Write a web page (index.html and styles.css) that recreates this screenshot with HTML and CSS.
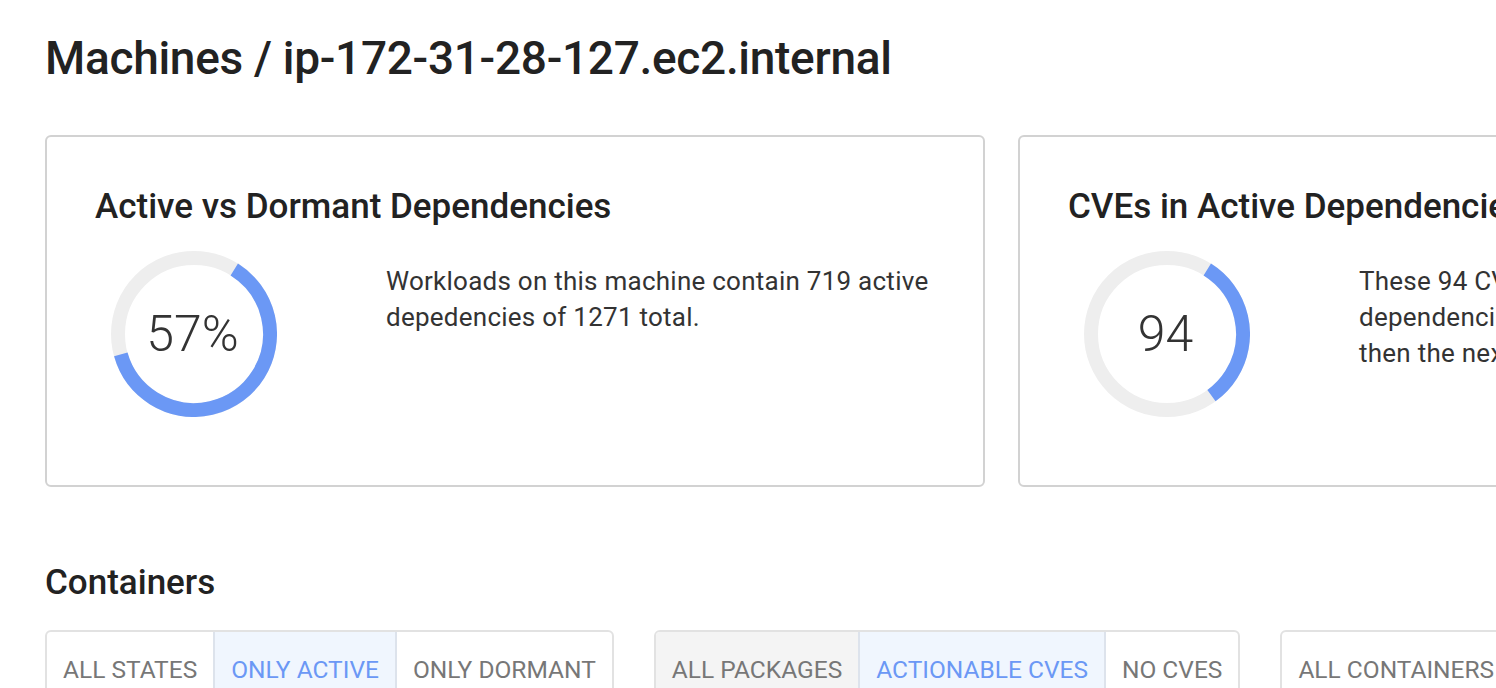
FILE: index.html
```html
<!DOCTYPE html>
<html>
<head>
<meta charset="utf-8">
<link rel="stylesheet" href="styles.css">
</head>
<body>
<main class="page">
  <h1 class="page-title">Machines / ip-172-31-28-127.ec2.internal</h1>

  <section class="cards">
    <article class="card">
      <h2 class="card-title">Active vs Dormant Dependencies</h2>
      <div class="card-body">
        <div class="donut">
          <svg viewBox="0 0 166 166" width="166" height="166">
            <circle cx="83" cy="83" r="76" fill="none" stroke="#eeeeee" stroke-width="14"/>
            <circle cx="83" cy="83" r="76" fill="none" stroke="#6b98f5" stroke-width="14" stroke-dasharray="294.5 477.5" transform="rotate(-58 83 83)"/>
          </svg>
          <span class="donut-value">57%</span>
        </div>
        <p class="card-text">Workloads on this machine contain 719 active depedencies of 1271 total.</p>
      </div>
    </article>

    <article class="card">
      <h2 class="card-title">CVEs in Active Dependencies</h2>
      <div class="card-body">
        <div class="donut">
          <svg viewBox="0 0 166 166" width="166" height="166">
            <circle cx="83" cy="83" r="76" fill="none" stroke="#eeeeee" stroke-width="14"/>
            <circle cx="83" cy="83" r="76" fill="none" stroke="#6b98f5" stroke-width="14" stroke-dasharray="148.6 477.5" transform="rotate(-58 83 83)"/>
          </svg>
          <span class="donut-value">94</span>
        </div>
        <p class="card-text">These 94 CVEs were found in active<br>dependencies and should be prioritized<br>then the next 212 in dormant ones.</p>
      </div>
    </article>
  </section>

  <h2 class="section-title">Containers</h2>

  <div class="filters">
    <div class="seg-group">
      <span class="seg">All states</span>
      <span class="seg seg-active">Only active</span>
      <span class="seg">Only dormant</span>
    </div>
    <div class="seg-group">
      <span class="seg seg-muted">All packages</span>
      <span class="seg seg-active">Actionable CVEs</span>
      <span class="seg">No CVEs</span>
    </div>
    <div class="seg-group">
      <span class="seg">All containers</span>
      <span class="seg">With issues</span>
    </div>
  </div>
</main>
</body>
</html>
```

FILE: styles.css
```css
html, body {
  margin: 0;
  padding: 0;
  background: #ffffff;
  overflow: hidden;
}

body {
  font-family: Roboto, "Liberation Sans", sans-serif;
  color: #222222;
}

.page {
  padding: 28px 0 0 45px;
  width: 2200px;
}

.page-title {
  margin: 0;
  font-size: 46px;
  font-weight: 500;
  line-height: 60px;
  letter-spacing: -0.3px;
  color: #222222;
}

.cards {
  display: flex;
  gap: 33px;
  margin-top: 47px;
}

.card {
  box-sizing: border-box;
  width: 940px;
  height: 352px;
  border: 2px solid #d2d2d2;
  border-radius: 6px;
  padding: 50px 48px 0 48px;
  flex-shrink: 0;
}

.card-title {
  margin: 0;
  font-size: 35px;
  font-weight: 500;
  line-height: 40px;
  letter-spacing: 0;
  color: #222222;
}

.card-body {
  display: flex;
  align-items: flex-start;
  margin-top: 24px;
}

.donut {
  position: relative;
  width: 166px;
  height: 166px;
  margin-left: 16px;
  flex-shrink: 0;
}

.donut svg {
  display: block;
}

.donut-value {
  position: absolute;
  inset: 0;
  display: flex;
  align-items: center;
  justify-content: center;
  font-size: 50px;
  font-weight: 300;
  color: #333333;
  padding-right: 3px;
}

.card-text {
  margin: 12px 0 0 109px;
  font-size: 26px;
  line-height: 36px;
  font-weight: 400;
  letter-spacing: 0.25px;
  color: #333333;
  width: 580px;
}

.section-title {
  margin: 76px 0 0 0;
  font-size: 35px;
  font-weight: 500;
  line-height: 40px;
  color: #222222;
}

.filters {
  display: flex;
  gap: 40px;
  margin-top: 27px;
}

.seg-group {
  display: flex;
  border: 2px solid #e2e2e2;
  border-radius: 6px;
  overflow: hidden;
  flex-shrink: 0;
}

.seg {
  padding: 22px 16px 24px 16px;
  font-size: 24.5px;
  line-height: 32px;
  text-transform: uppercase;
  color: #777777;
  border-left: 2px solid #dde3ec;
}

.seg:first-child {
  border-left: none;
}

.seg-active {
  background: #f0f6fe;
  color: #6b98f5;
}

.seg-muted {
  background: #f4f4f4;
}
```
